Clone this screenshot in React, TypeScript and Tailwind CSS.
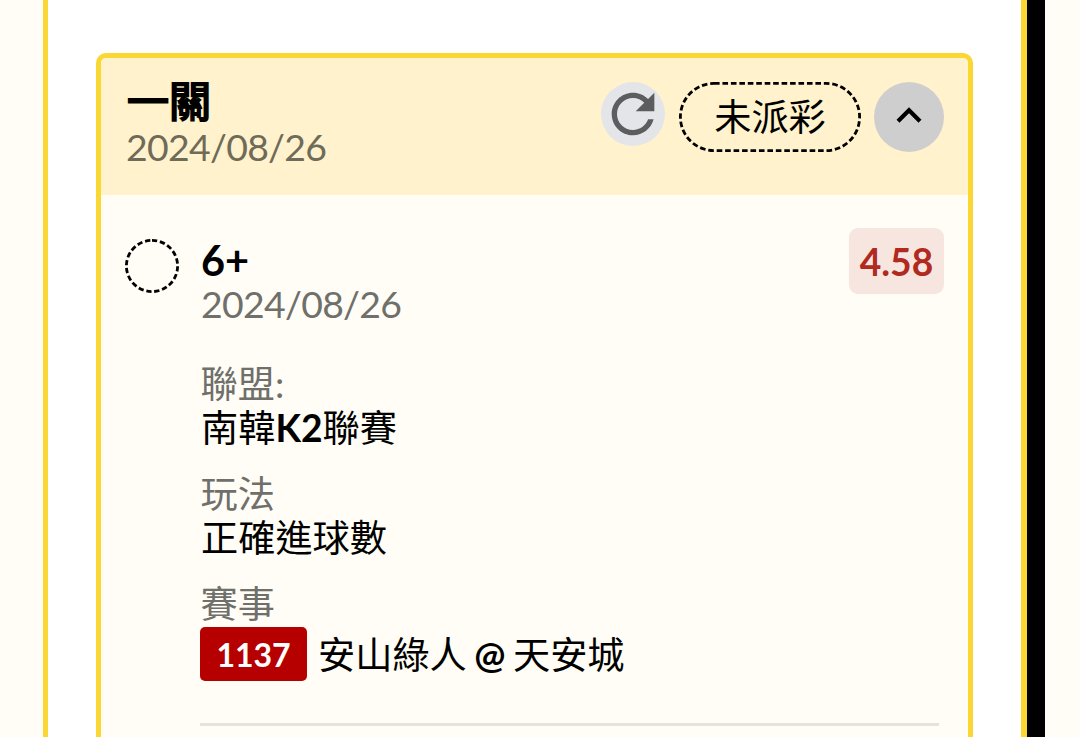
import type { ReactNode } from "react";

const bet = {
  title: "一關",
  date: "2024/08/26",
  status: "未派彩",
};

const pick = {
  name: "6+",
  date: "2024/08/26",
  odds: "4.58",
  matchNo: "1137",
  away: "安山綠人",
  home: "天安城",
};

function RefreshIcon() {
  return (
    <svg className="size-[64px]" viewBox="0 0 24 24" fill="#5c5d5f">
      <path d="M17.65 6.35C16.2 4.9 14.21 4 12 4c-4.42 0-7.99 3.58-7.99 8s3.57 8 7.99 8c3.73 0 6.84-2.55 7.73-6h-2.08c-.82 2.33-3.04 4-5.65 4-3.31 0-6-2.69-6-6s2.69-6 6-6c1.66 0 3.14.69 4.22 1.78L13 11h7V4l-2.35 2.35z" />
    </svg>
  );
}

function ChevronUpIcon() {
  return (
    <svg className="w-[26px] h-[18px]" viewBox="0 0 26 18" fill="none">
      <path d="M2 15.2L13 4.2L24 15.2" stroke="#000" strokeWidth="4.2" />
    </svg>
  );
}

// Pill and circle outlines need an even dash length along the curve
function DashedOutline({ width, height, dash }: { width: number; height: number; dash: string }) {
  return (
    <svg className="absolute inset-0" width={width} height={height} fill="none">
      <rect
        x="1.4"
        y="1.4"
        width={width - 2.8}
        height={height - 2.8}
        rx={(height - 2.8) / 2}
        stroke="#000"
        strokeWidth="2.8"
        strokeDasharray={dash}
      />
    </svg>
  );
}

function Field({ label, children }: { label: string; children: ReactNode }) {
  return (
    <div>
      <div className="h-[44px] pl-[0.5px] text-[#6f6f6b]">{label}</div>
      {children}
    </div>
  );
}

export default function App() {
  return (
    <div className="flex h-[737px] w-[1080px] overflow-hidden bg-[#fffdf5] font-['Lato','Noto_Sans_CJK_TC',sans-serif] text-[37.2px] leading-[44px] text-black whitespace-nowrap">
      <main className="ml-[43px] w-[984px] border-r-[6px] border-l-[5px] border-[#fad733] bg-white pt-[53px] pl-[48px]">
        <section className="h-[760px] w-[877px] overflow-hidden rounded-[10px] border-[5px] border-[#fad733] bg-[#fffdf5]">
          <header className="flex h-[137px] justify-between bg-[#fff2cc] pt-[24px] pr-[24px] pl-[25px]">
            <div className="-mt-[3px]">
              <h2 className="h-[46px] pl-px text-[42px] font-normal [-webkit-text-stroke:2px_#000]">{bet.title}</h2>
              <div className="text-[37.4px] tracking-[-0.7px] text-[#6f6b58]">{bet.date}</div>
            </div>
            <div className="flex">
              <button className="flex size-[64px] items-center justify-center rounded-full bg-[#e3e5e9]">
                <RefreshIcon />
              </button>
              <div className="relative ml-[14px] flex h-[70px] w-[182px] items-center justify-center">
                <DashedOutline width={182} height={70} dash="5.6 2.85" />
                {bet.status}
              </div>
              <button className="ml-[13px] flex size-[70px] items-center justify-center rounded-full bg-[#cecece] pb-[4px]">
                <ChevronUpIcon />
              </button>
            </div>
          </header>

          <article className="flex pt-[33px] pr-[24px] pl-[24px]">
            <div className="relative mt-[11px] size-[54px] shrink-0">
              <DashedOutline width={54} height={54} dash="5.3 2.74" />
            </div>
            <div className="ml-[21px] grow">
              <div className="flex justify-between">
                <div className="pt-[10px] pl-px">
                  <h3 className="h-[44px] text-[41.5px] font-bold">{pick.name}</h3>
                  <div className="text-[37.4px] tracking-[-0.7px] text-[#6f6f6b]">{pick.date}</div>
                </div>
                <span className="flex h-[66px] w-[95px] items-center justify-center rounded-[9px] bg-[#f7e6e0] pt-[2px] font-bold text-[#b02a20]">
                  {pick.odds}
                </span>
              </div>

              <div className="mt-[36px] flex flex-col gap-[22px]">
                <Field label="聯盟:">
                  <div className="h-[44px] pl-px">
                    南韓<span className="font-bold">K2</span>聯賽
                  </div>
                </Field>
                <Field label="玩法">
                  <div className="h-[44px] pl-px">正確進球數</div>
                </Field>
                <Field label="賽事">
                  <div className="flex items-center">
                    <span className="mt-px flex h-[54px] w-[107px] items-center justify-center rounded-[5px] bg-[#b60000] pt-[2px] text-[32px] font-bold text-white">
                      {pick.matchNo}
                    </span>
                    <span className="ml-[11px] pt-[3px]">{pick.away}</span>
                    <span className="mx-[7.5px] pt-[3px] text-[37px] font-bold">@</span>
                    <span className="pt-[3px]">{pick.home}</span>
                  </div>
                </Field>
              </div>
              <hr className="mt-[42px] mr-[5px] border-t-[3px] border-[#e6e3de]" />
            </div>
          </article>
        </section>
      </main>
      <div className="w-[18px] bg-black" />
    </div>
  );
}
